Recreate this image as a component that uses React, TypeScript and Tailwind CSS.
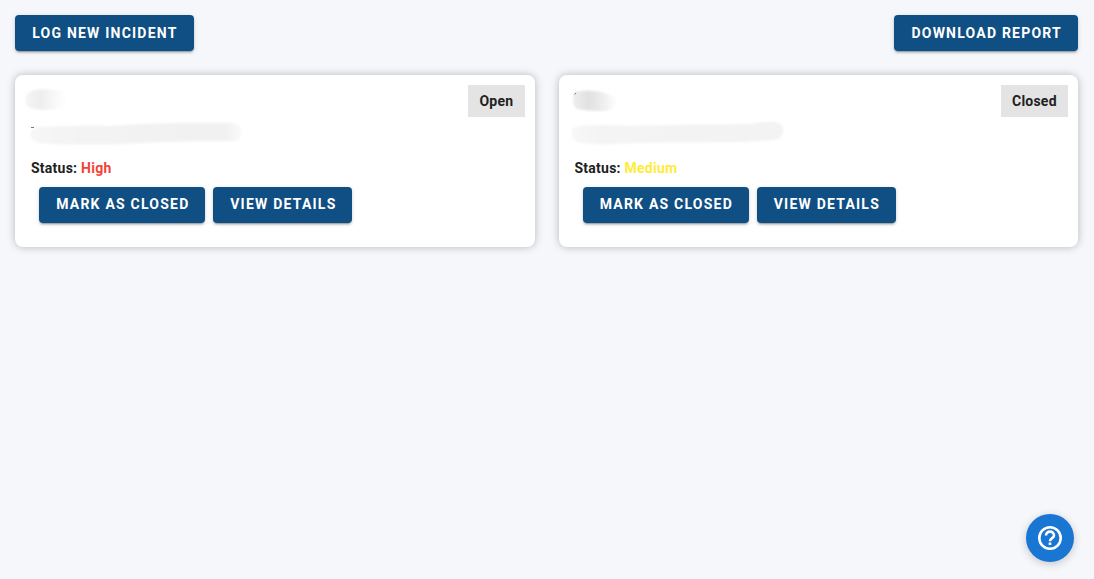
const buttonClass =
  "h-9 rounded bg-[#104f83] pl-[17.2px] text-[14px] font-bold tracking-[1.22px] whitespace-nowrap text-white uppercase shadow-[0_3px_1px_-2px_rgba(0,0,0,0.2),0_2px_2px_rgba(0,0,0,0.14),0_1px_5px_rgba(0,0,0,0.12)]";

type Stop = [number, string];
type Shape = { path: string; stops: Stop[]; mark?: string };

const shapes: Record<string, Shape> = {
  openTitle: {
    path: "M11 5Q24 3 42 7Q46 14 42 22Q26 26 11 24.5Q0 23 0 15Q1 6 11 5Z",
    stops: [[0, "#f5f5f5"], [0.35, "#eeeeee"], [0.55, "#f4f4f4"], [0.8, "#fcfcfc"], [1, "#ffffff"]],
  },
  closedTitle: {
    path: "M6 7Q18 4 32 7Q43 10 49 14Q47 24 38 26Q18 26 9 24Q4 23 4 14Q4 9 6 7Z",
    stops: [[0, "#eeeeee"], [0.35, "#e1e1e1"], [0.6, "#ebebeb"], [0.85, "#f8f8f8"], [1, "#ffffff"]],
    mark: "M5.7 9.5L7 7.8",
  },
  openText: {
    path: "M7 7Q50 5 80 6Q130 2 203 3Q212 4 212 12Q212 21 202 21Q150 21 80 24.5Q30 25 9 23Q-1 20 1 11Z",
    stops: [[0, "#f6f6f6"], [0.12, "#f4f4f4"], [0.92, "#f1f1f1"], [1, "#fbfbfb"]],
    mark: "M1 7.5H4",
  },
  closedText: {
    path: "M6 6Q30 4 60 6Q130 4 180 4Q193 1 205 2Q213 4 212 12Q211 19 202 20Q185 21 175 22Q70 22 40 24Q20 25 6 22Q-2 16 1 9Z",
    stops: [[0, "#f8f8f8"], [0.12, "#f4f4f4"], [0.9, "#f3f3f3"], [1, "#f3f3f3"]],
  },
};

function Smudge({ name, wide }: { name: string; wide?: boolean }) {
  const shape = shapes[name];
  const width = wide ? 216 : 50;
  return (
    <svg width={width} height="28" viewBox={`0 0 ${width} 28`} aria-hidden="true">
      <defs>
        <linearGradient id={name}>
          {shape.stops.map(([offset, color]) => (
            <stop key={offset} offset={offset} stopColor={color} />
          ))}
        </linearGradient>
        <filter id={name + "Blur"}>
          <feGaussianBlur stdDeviation="1" />
        </filter>
      </defs>
      <path d={shape.path} fill={`url(#${name})`} filter={`url(#${name}Blur)`} />
      {shape.mark && <path d={shape.mark} fill="none" stroke="#666" strokeWidth="0.9" />}
    </svg>
  );
}

function HelpIcon() {
  return (
    <svg width="24" height="24" viewBox="0 0 24 24" fill="none" stroke="currentColor" strokeWidth="2.6" aria-hidden="true">
      <circle cx="12" cy="12" r="10.7" />
      <path d="M8 9.4a4 3.8 0 1 1 8 0c0 2.7-4 2.8-4 5.8" />
      <path d="M12 16.5v2.5" />
    </svg>
  );
}

function Card({ status, level, color, name }: { status: string; level: string; color: string; name: string }) {
  return (
    <article className="h-[172px] flex-1 rounded-lg bg-white shadow-[0_0_8px_rgba(0,0,0,0.26)]">
      <div className="flex h-[45px] items-start justify-between px-[10px] pt-[10px]">
        <Smudge name={name + "Title"} />
        <span className="h-8 bg-[#e4e4e4] pr-[11.25px] pl-[11.5px] text-[14px] leading-8 font-bold tracking-[0.22px]">{status}</span>
      </div>
      <div className={name === "open" ? "h-[39px] pl-[15px]" : "h-[39px] pl-3"}>
        <Smudge name={name + "Text"} wide />
      </div>
      <div className="h-7 pl-4 text-[14px] leading-[18px] font-bold tracking-[0.25px]">
        Status: <span className={color}>{level}</span>
      </div>
      <div className="flex gap-2 pl-6">
        <button className={`${buttonClass} pr-[15.6px] pb-0.5 leading-[34px]`}>Mark as closed</button>
        <button className={`${buttonClass} pr-[15.8px] pb-0.5 leading-[34px]`}>View details</button>
      </div>
    </article>
  );
}

export default function App() {
  return (
    <main className="flex h-[579px] flex-col bg-[#f6f7fb] pt-[15px] pr-4 pl-[15px] font-[Roboto,sans-serif] text-[#212121]">
      <header className="flex justify-between">
        <button className={`${buttonClass} pr-4 leading-9`}>Log new incident</button>
        <button className={`${buttonClass} pr-4 leading-9`}>Download report</button>
      </header>
      <section className="mt-6 flex gap-6">
        <Card status="Open" level="High" color="text-[#f44336]" name="open" />
        <Card status="Closed" level="Medium" color="text-[#ffeb3b]" name="closed" />
      </section>
      <button aria-label="Help" className="mt-auto mr-1 mb-[17px] flex size-12 items-center justify-center self-end rounded-full bg-[#1976d2] text-white shadow-[0_2px_8px_rgba(0,0,0,0.2)]">
        <HelpIcon />
      </button>
    </main>
  );
}
